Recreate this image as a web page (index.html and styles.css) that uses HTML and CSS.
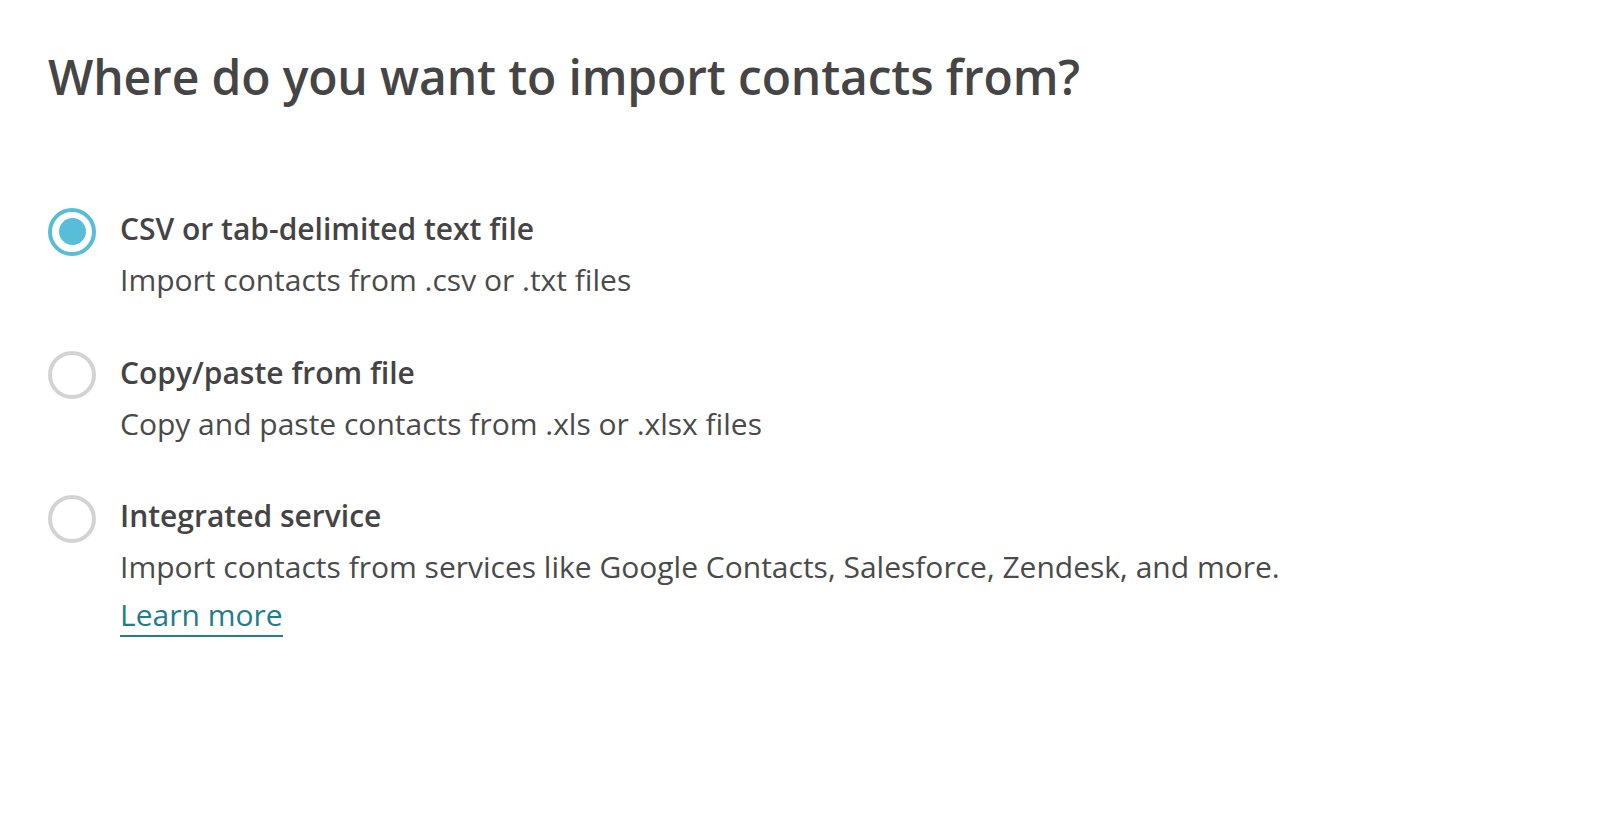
FILE: index.html
```html
<!DOCTYPE html>
<html lang="en">
<head>
<meta charset="utf-8">
<title>Import contacts</title>
<link rel="stylesheet" href="styles.css">
</head>
<body>
<main class="page">
  <h1 class="title">Where do you want to import contacts from?</h1>
  <div class="options">
    <label class="option">
      <span class="radio radio-checked"><span class="radio-dot"></span></span>
      <span class="option-text">
        <span class="option-label">CSV or tab-delimited text file</span>
        <span class="option-desc">Import contacts from .csv or .txt files</span>
      </span>
    </label>
    <label class="option">
      <span class="radio"></span>
      <span class="option-text">
        <span class="option-label">Copy/paste from file</span>
        <span class="option-desc">Copy and paste contacts from .xls or .xlsx files</span>
      </span>
    </label>
    <label class="option">
      <span class="radio"></span>
      <span class="option-text">
        <span class="option-label">Integrated service</span>
        <span class="option-desc">Import contacts from services like Google Contacts, Salesforce, Zendesk, and more.</span>
        <span class="option-link"><a class="link" href="#">Learn more</a></span>
      </span>
    </label>
  </div>
</main>
</body>
</html>
```
FILE: styles.css
```css
html, body {
  margin: 0;
  padding: 0;
  background: #ffffff;
}

body {
  font-family: "Open Sans", "Noto Sans", sans-serif;
  color: #444444;
}

.page {
  padding: 48px 48px 0 48px;
}

.title {
  margin: 0;
  font-size: 48px;
  line-height: 58px;
  font-weight: 600;
  color: #454545;
  letter-spacing: -0.15px;
}

.options {
  display: flex;
  flex-direction: column;
  gap: 44.5px;
  margin-top: 97px;
}

.option {
  display: flex;
  align-items: flex-start;
  gap: 24px;
  cursor: pointer;
}

.radio {
  flex: 0 0 auto;
  width: 48px;
  height: 48px;
  margin-top: 4.5px;
  box-sizing: border-box;
  border: 4.5px solid #d3d3d3;
  border-radius: 50%;
  display: flex;
  align-items: center;
  justify-content: center;
}

.radio-checked {
  border-color: #57bdd8;
}

.radio-dot {
  width: 27px;
  height: 27px;
  border-radius: 50%;
  background: #57bdd8;
}

.option-text {
  display: flex;
  flex-direction: column;
  padding-top: 3px;
}

.option-label {
  font-size: 30px;
  line-height: 45px;
  font-weight: 600;
  color: #444444;
  margin-bottom: 6px;
}

.option-desc {
  font-size: 30px;
  line-height: 45px;
  font-weight: 400;
  color: #4a4a4a;
}

.option-link {
  font-size: 30px;
  line-height: 45px;
  margin-top: 3px;
}

.link {
  color: #227c8d;
  text-decoration: none;
  border-bottom: 2px solid #227c8d;
}
```
